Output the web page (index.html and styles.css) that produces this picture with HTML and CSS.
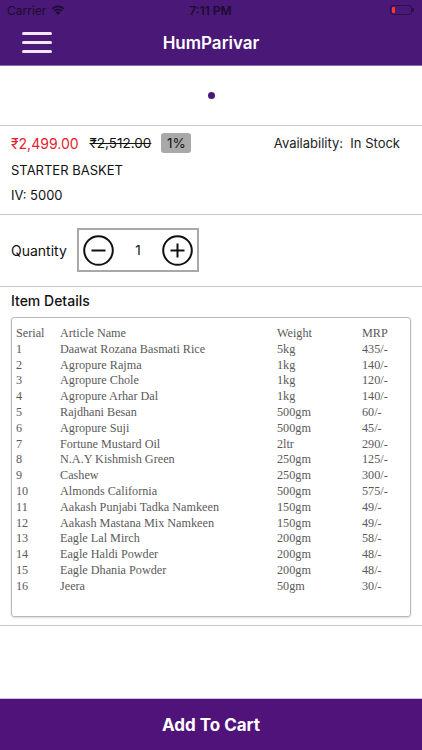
FILE: index.html
```html
<!DOCTYPE html>
<html lang="en">
<head>
    <meta charset="UTF-8">
    <meta name="viewport" content="width=device-width, initial-scale=1.0">
    <title>HumParivar</title>
    <link rel="stylesheet" href="styles.css">
</head>
<body>
    <div class="page">
        <div class="status-bar">
            <div class="carrier">
                Carrier
                <svg class="wifi" width="14" height="10" viewBox="0 0 14 10">
                    <path d="M7 10 L4.6 7.4 A3.4 3.4 0 0 1 9.4 7.4 Z" fill="#1c0b2e"/>
                    <path d="M2.6 5.4 A6.2 6.2 0 0 1 11.4 5.4 L10.2 6.6 A4.5 4.5 0 0 0 3.8 6.6 Z" fill="#1c0b2e"/>
                    <path d="M0.4 3.2 A9.3 9.3 0 0 1 13.6 3.2 L12.4 4.4 A7.6 7.6 0 0 0 1.6 4.4 Z" fill="#1c0b2e"/>
                </svg>
            </div>
            <div class="time">7:11 PM</div>
            <div class="battery">
                <span class="battery-level"></span>
            </div>
        </div>

        <header class="nav-bar">
            <div class="menu-btn">
                <span></span>
                <span></span>
                <span></span>
            </div>
            <div class="nav-title">HumParivar</div>
        </header>

        <div class="slider">
            <span class="slider-dot"></span>
        </div>

        <div class="product">
            <div class="price-row">
                <span class="price">₹2,499.00</span>
                <span class="old-price">₹2,512.00</span>
                <span class="discount">1%</span>
                <span class="availability">Availability:&nbsp; In Stock</span>
            </div>
            <div class="product-name">STARTER BASKET</div>
            <div class="product-iv">IV: 5000</div>
        </div>

        <div class="quantity">
            <span class="quantity-label">Quantity</span>
            <div class="stepper">
                <svg width="31" height="31" viewBox="0 0 31 31">
                    <circle cx="15.5" cy="15.5" r="14.3" fill="none" stroke="#111" stroke-width="2"/>
                    <line x1="8.5" y1="15.5" x2="22.5" y2="15.5" stroke="#111" stroke-width="2"/>
                </svg>
                <span class="stepper-value">1</span>
                <svg width="31" height="31" viewBox="0 0 31 31">
                    <circle cx="15.5" cy="15.5" r="14.3" fill="none" stroke="#111" stroke-width="2"/>
                    <line x1="8.5" y1="15.5" x2="22.5" y2="15.5" stroke="#111" stroke-width="2"/>
                    <line x1="15.5" y1="8.5" x2="15.5" y2="22.5" stroke="#111" stroke-width="2"/>
                </svg>
            </div>
        </div>

        <div class="details">
            <div class="details-title">Item Details</div>
            <div class="details-box">
                <table class="items">
                    <tr><td class="c-serial">Serial</td><td class="c-name">Article Name</td><td class="c-weight">Weight</td><td>MRP</td></tr>
                    <tr><td>1</td><td>Daawat Rozana Basmati Rice</td><td>5kg</td><td>435/-</td></tr>
                    <tr><td>2</td><td>Agropure Rajma</td><td>1kg</td><td>140/-</td></tr>
                    <tr><td>3</td><td>Agropure Chole</td><td>1kg</td><td>120/-</td></tr>
                    <tr><td>4</td><td>Agropure Arhar Dal</td><td>1kg</td><td>140/-</td></tr>
                    <tr><td>5</td><td>Rajdhani Besan</td><td>500gm</td><td>60/-</td></tr>
                    <tr><td>6</td><td>Agropure Suji</td><td>500gm</td><td>45/-</td></tr>
                    <tr><td>7</td><td>Fortune Mustard Oil</td><td>2ltr</td><td>290/-</td></tr>
                    <tr><td>8</td><td>N.A.Y Kishmish Green</td><td>250gm</td><td>125/-</td></tr>
                    <tr><td>9</td><td>Cashew</td><td>250gm</td><td>300/-</td></tr>
                    <tr><td>10</td><td>Almonds California</td><td>500gm</td><td>575/-</td></tr>
                    <tr><td>11</td><td>Aakash Punjabi Tadka Namkeen</td><td>150gm</td><td>49/-</td></tr>
                    <tr><td>12</td><td>Aakash Mastana Mix Namkeen</td><td>150gm</td><td>49/-</td></tr>
                    <tr><td>13</td><td>Eagle Lal Mirch</td><td>200gm</td><td>58/-</td></tr>
                    <tr><td>14</td><td>Eagle Haldi Powder</td><td>200gm</td><td>48/-</td></tr>
                    <tr><td>15</td><td>Eagle Dhania Powder</td><td>200gm</td><td>48/-</td></tr>
                    <tr><td>16</td><td>Jeera</td><td>50gm</td><td>30/-</td></tr>
                </table>
            </div>
        </div>

        <div class="spacer"></div>

        <button class="add-to-cart">Add To Cart</button>
    </div>
</body>
</html>
```

FILE: styles.css
```css
body {
    margin: 0;
    font-family: Inter, "Noto Sans", sans-serif;
    background-color: white;
    color: #111;
}
.page {
    display: flex;
    flex-direction: column;
    width: 422px;
    height: 750px;
    overflow: hidden;
}
.status-bar {
    height: 20px;
    background-color: #4a1877;
    display: flex;
    align-items: center;
    justify-content: space-between;
    padding: 0 8px 0 7px;
    font-size: 12px;
    color: #1c0b2e;
}
.carrier {
    display: flex;
    align-items: center;
    gap: 5px;
    width: 120px;
}
.time {
    font-weight: 600;
}
.battery {
    width: 120px;
    display: flex;
    justify-content: flex-end;
    align-items: flex-start;
}
.battery::after {
    content: "";
    width: 2px;
    height: 4px;
    margin-top: 3px;
    background-color: #2c1048;
    border-radius: 0 1px 1px 0;
}
.battery-level {
    width: 20px;
    height: 8px;
    border: 1px solid #2c1048;
    border-radius: 3px;
    position: relative;
}
.battery-level::before {
    content: "";
    position: absolute;
    left: 1px;
    top: 1px;
    width: 3px;
    height: 6px;
    background-color: #ff3b30;
    border-radius: 1px;
}
.nav-bar {
    height: 45px;
    background-color: #4a1877;
    display: flex;
    align-items: center;
    position: relative;
    border-bottom: 1px solid #8b6aa6;
}
.menu-btn {
    display: flex;
    flex-direction: column;
    gap: 6px;
    margin-left: 22px;
    z-index: 1;
}
.menu-btn span {
    display: block;
    width: 30px;
    height: 3px;
    border-radius: 2px;
    background-color: #f3e6f6;
}
.nav-title {
    position: absolute;
    left: 0;
    right: 0;
    text-align: center;
    color: white;
    font-size: 17px;
    font-weight: 600;
}
.slider {
    height: 59px;
    display: flex;
    justify-content: center;
    align-items: center;
    border-bottom: 1px solid #c8c8c8;
}
.slider-dot {
    width: 7px;
    height: 7px;
    border-radius: 50%;
    background-color: #4a1877;
}
.product {
    padding: 7px 11px 9px;
    border-bottom: 1px solid #c8c8c8;
    font-size: 13px;
}
.price-row {
    display: flex;
    align-items: center;
    height: 20px;
}
.price {
    color: #e3222f;
    font-size: 14px;
}
.old-price {
    margin-left: 11px;
    text-decoration: line-through;
    font-size: 13.5px;
}
.discount {
    margin-left: 10px;
    background-color: #a9a9a9;
    border-radius: 3px;
    width: 30px;
    height: 20px;
    line-height: 20px;
    text-align: center;
    font-size: 13.5px;
}
.availability {
    margin-left: auto;
    margin-right: 11px;
    color: #222;
}
.product-name {
    margin-top: 7px;
    line-height: 20px;
}
.product-iv {
    margin-top: 5px;
    line-height: 20px;
}
.quantity {
    display: flex;
    align-items: center;
    padding: 13px 11px 14px;
    border-bottom: 1px solid #c8c8c8;
}
.quantity-label {
    font-size: 14px;
    width: 66px;
}
.stepper {
    display: flex;
    align-items: center;
    justify-content: space-between;
    box-sizing: border-box;
    width: 122px;
    height: 44px;
    padding: 0 4px 0 4px;
    border: 2px solid #a8a8a8;
}
.stepper-value {
    font-size: 13.5px;
}
.details {
    padding: 4px 11px 8px;
    border-bottom: 1px solid #c8c8c8;
}
.details-title {
    font-size: 14px;
    font-weight: 500;
    line-height: 20px;
}
.details-box {
    margin-top: 6px;
    height: 300px;
    box-sizing: border-box;
    border: 1px solid #b8b8b8;
    border-radius: 3px;
    box-shadow: 0 1px 2px rgba(0, 0, 0, 0.15);
    padding: 8px 4px;
}
.items {
    border-collapse: collapse;
    font-family: "Liberation Serif", serif;
    font-size: 12.2px;
    color: #5a5a5a;
}
.items td {
    padding: 0;
    height: 15.8px;
    line-height: 15.8px;
    white-space: nowrap;
}
.c-serial {
    width: 44px;
}
.c-name {
    width: 217px;
}
.c-weight {
    width: 85px;
}
.spacer {
    flex: 1;
}
.add-to-cart {
    height: 52px;
    border: none;
    border-top: 1px solid #d9b9ea;
    background-color: #4f137a;
    color: white;
    font-family: Inter, "Noto Sans", sans-serif;
    font-size: 17px;
    font-weight: 700;
    cursor: pointer;
}
```
